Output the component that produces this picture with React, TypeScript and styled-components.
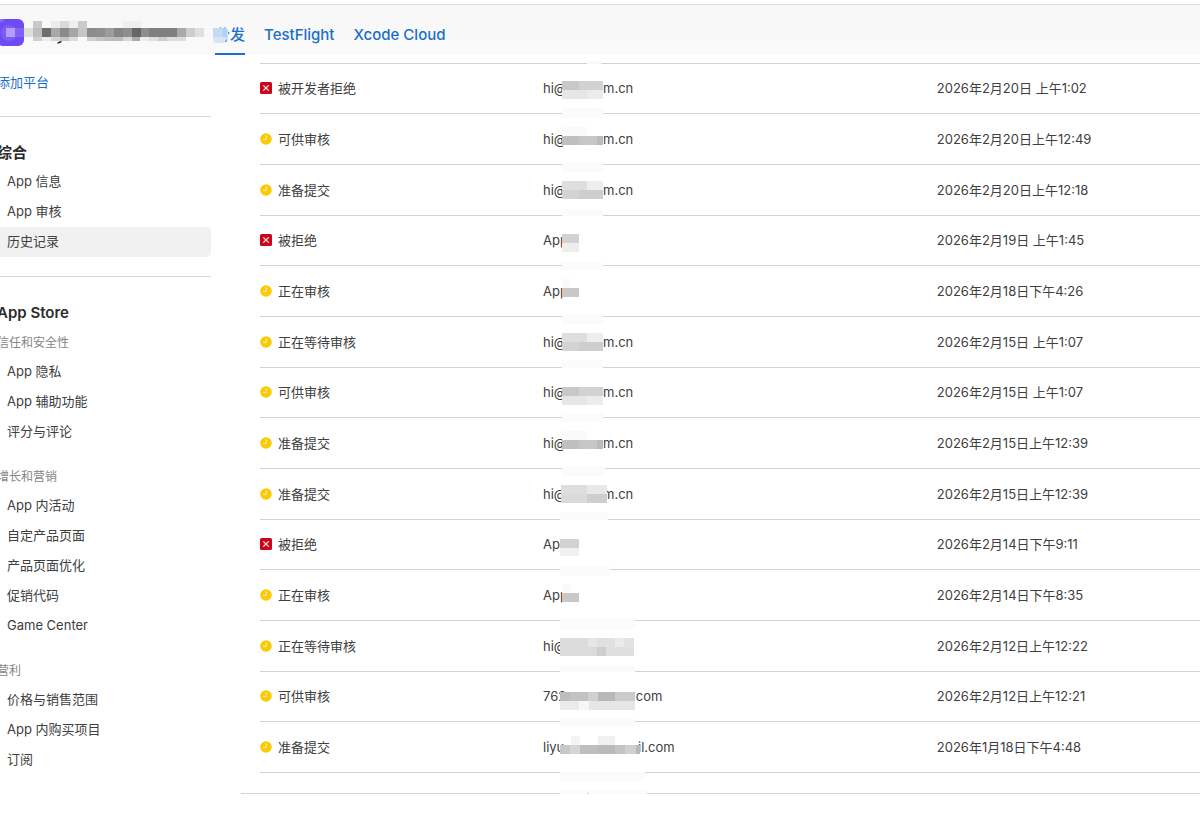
import React from "react";
import styled, { createGlobalStyle } from "styled-components";

const GlobalStyle = createGlobalStyle`
  * { box-sizing: border-box; }
  body {
    margin: 0;
    background: #fff;
    color: #333;
    font-family: Inter, "Noto Sans CJK SC", sans-serif;
    font-size: 13px;
    line-height: 20px;
    overflow-x: hidden;
  }
`;

/* x, y, width, height, fill */
type Block = [number, number, number, number, string];

const Header = styled.header`
  display: flex;
  align-items: stretch;
  height: 51px;
  margin-top: 4px;
  border-top: 1px solid #dcdcdc;
  background: linear-gradient(#f7f7f7, #fafafa);
`;

const AppBadge = styled.div`
  width: 215px;
  flex: none;
`;

const BadgeArt = styled.svg`
  display: block;
`;

const Tabs = styled.nav`
  display: flex;
  gap: 19px;
`;

const Tab = styled.a<{ $active?: boolean }>`
  position: relative;
  display: flex;
  align-items: center;
  padding-top: 20px;
  padding-bottom: ${(p) => (p.$active ? 8 : 10)}px;
  border-bottom: ${(p) => (p.$active ? "2px solid #1a6fc9" : "none")};
  color: #1a6fc9;
  font-size: 15px;
  font-weight: 500;
  text-decoration: none;
`;

const TabMask = styled.svg`
  position: absolute;
  left: -2px;
  top: 23px;
`;

const Page = styled.div`
  display: flex;
  align-items: flex-start;
`;

const Sidebar = styled.aside`
  width: 211px;
  flex: none;
  padding-top: 12px;
`;

const AddLink = styled.a`
  display: block;
  margin-left: -3px;
  line-height: 30px;
  color: #1a6fc9;
  text-decoration: none;
`;

const Section = styled.section`
  margin-top: 19px;
  padding-top: 20px;
  border-top: 1px solid #d6d6d6;
`;

const SectionTitle = styled.h2`
  margin: 0 0 0 -3px;
  padding-top: 2px;
  font-size: 15px;
  font-weight: 600;
  line-height: 28px;
  color: #2b2b2b;
`;

const GroupTitle = styled.h3`
  margin: 0 0 0 -3px;
  padding-top: 2px;
  font-size: 12px;
  font-weight: 400;
  line-height: 28px;
  color: #858585;
`;

const NavList = styled.ul`
  list-style: none;
  margin: 0;
  padding: 0;

  & + h3 {
    margin-top: 14px;
  }
`;

const NavLink = styled.a<{ $current?: boolean }>`
  display: block;
  padding: 0 0 2px 7px;
  line-height: 28px;
  color: #404040;
  text-decoration: none;
  border-radius: 0 5px 5px 0;
  background: ${(p) => (p.$current ? "#f1f1f1" : "transparent")};
`;

const Main = styled.main`
  position: relative;
  flex: 1;
  min-width: 0;
  margin-left: 30px;
  padding-top: 8px;
`;

const HistoryWrap = styled.div`
  padding: 0 0 20px 19px;
  border-bottom: 1px solid #d2d2d2;
`;

const HistoryTable = styled.table`
  width: 100%;
  table-layout: fixed;
  border-collapse: separate;
  border-spacing: 0;
  border-top: 1px solid #d2d2d2;
`;

const Cell = styled.td<{ $share?: number }>`
  position: relative;
  width: ${(p) => (p.$share ? `${p.$share}%` : "auto")};
  padding: 0;
  border-bottom: 1px solid #d2d2d2;
  color: #404040;
  white-space: nowrap;
`;

const Row = styled.tr`
  height: 51px;

  &:nth-child(3n + 1) {
    height: 50px;
  }

  &:nth-child(3n + 1) > td {
    padding-bottom: 1px;
  }
`;

const Status = styled.span`
  display: flex;
  align-items: center;
  gap: 6px;
`;

const StatusIcon = styled.svg`
  flex: none;
`;

const Account = styled.span`
  display: flex;
  padding-left: 1px;
`;

const AccountStart = styled.span<{ $width: number }>`
  width: ${(p) => p.$width}px;
`;

const Mask = styled.svg`
  position: absolute;
  left: 0;
  top: 0;
`;

const HeadMask = styled.svg`
  position: absolute;
  left: 346px;
  top: 6px;
`;

const FootMask = styled.svg`
  position: absolute;
  left: 301px;
  bottom: -27px;
`;

const Blocks = ({ data }: { data: Block[] }) => (
  <>
    {data.map(([x, y, w, h, fill], i) => (
      <rect key={i} x={x} y={y} width={w} height={h} fill={fill} shapeRendering="crispEdges" />
    ))}
  </>
);

const badgeBlocks: Block[] = [
  [33, 16, 9, 7, "#c9c9c9"], [51, 16, 9, 7, "#ececec"], [60, 16, 9, 7, "#dadada"],
  [69, 16, 9, 7, "#efefef"], [78, 16, 9, 7, "#cbcbcb"], [123, 16, 18, 7, "#efefef"],
  [24, 23, 9, 9, "#dedede"], [33, 23, 9, 9, "#bebebe"], [42, 23, 9, 9, "#6e6e6e"],
  [51, 23, 9, 9, "#a8a8a8"], [60, 23, 9, 9, "#8a8a8a"], [69, 23, 9, 9, "#a6a6a6"],
  [78, 23, 9, 9, "#c6c6c6"], [87, 23, 9, 9, "#8c8c8c"], [96, 23, 9, 9, "#8f8f8f"],
  [105, 23, 9, 9, "#9c9c9c"], [114, 23, 9, 9, "#858585"], [123, 23, 9, 9, "#8e8e8e"],
  [132, 23, 9, 9, "#666666"], [141, 23, 8, 9, "#8e8e8e"], [149, 23, 28, 9, "#7f7f7f"],
  [177, 23, 9, 9, "#a9a9a9"], [186, 23, 9, 9, "#cdcdcd"], [195, 23, 9, 9, "#e0e0e0"],
  [33, 32, 9, 4, "#cfcfcf"], [42, 32, 9, 4, "#ececec"], [51, 32, 9, 4, "#d4d4d4"],
  [60, 32, 9, 4, "#c6c6c6"], [69, 32, 9, 4, "#dcdcdc"], [87, 32, 9, 4, "#cfcfcf"],
  [96, 32, 9, 4, "#c4c4c4"], [105, 32, 18, 4, "#bcbcbc"], [123, 32, 9, 4, "#d6d6d6"],
  [132, 32, 8, 4, "#ababab"], [140, 32, 9, 4, "#ececec"], [149, 32, 9, 4, "#e0e0e0"],
  [158, 32, 9, 4, "#cdcdcd"], [167, 32, 19, 4, "#dddddd"],
];

type State = "rejected" | "pending";

interface Entry {
  state: State;
  status: string;
  start: string;
  startWidth: number;
  end?: string;
  date: string;
  mask: Block[];
}

const darkTop: Block[] = [
  [20, 17, 17, 9, "#c8c8c8"], [37, 17, 24, 9, "#d2d2d2"],
  [20, 26, 25, 9, "#e6e6e6"], [45, 26, 16, 9, "#ececec"],
];
const thinBar: Block[] = [
  [20, 13, 25, 9, "#fafafa"], [20, 22, 17, 9, "#bfbfbf"],
  [37, 22, 18, 9, "#c6c6c6"], [55, 22, 6, 9, "#bababa"],
];
const darkBottom: Block[] = [
  [20, 16, 25, 9, "#dedede"], [45, 16, 16, 9, "#eeeeee"],
  [20, 25, 17, 9, "#d3d3d3"], [37, 25, 24, 9, "#cecece"],
];
const strip = (x: number, y: number, w: number, h: number): Block => [x, y, w, h, "#fbfbfb"];

const entries: Entry[] = [
  { state: "rejected", status: "被开发者拒绝", start: "hi@", startWidth: 60, end: "m.cn", date: "2026年2月20日 上午1:02",
    mask: [...darkTop, strip(20, 44, 41, 6)] },
  { state: "pending", status: "可供审核", start: "hi@", startWidth: 60, end: "m.cn", date: "2026年2月20日上午12:49",
    mask: [strip(20, 0, 41, 4), ...thinBar, strip(20, 49, 41, 2)] },
  { state: "pending", status: "准备提交", start: "hi@", startWidth: 60, end: "m.cn", date: "2026年2月20日上午12:18",
    mask: [strip(20, 0, 41, 7), ...darkBottom, strip(20, 44, 41, 7)] },
  { state: "rejected", status: "被拒绝", start: "App", startWidth: 60, date: "2026年2月19日 上午1:45",
    mask: [[20, 18, 17, 9, "#d2d2d2"], [20, 27, 17, 9, "#eeeeee"], strip(20, 46, 41, 4)] },
  { state: "pending", status: "正在审核", start: "App", startWidth: 60, date: "2026年2月18日下午4:26",
    mask: [strip(20, 0, 41, 4), [20, 13, 8, 9, "#fafafa"], [20, 22, 17, 9, "#c8c8c8"], strip(20, 49, 41, 2)] },
  { state: "pending", status: "正在等待审核", start: "hi@", startWidth: 60, end: "m.cn", date: "2026年2月15日 上午1:07",
    mask: [strip(20, 0, 41, 7), ...darkBottom, strip(20, 43, 41, 8)] },
  { state: "pending", status: "可供审核", start: "hi@", startWidth: 60, end: "m.cn", date: "2026年2月15日 上午1:07",
    mask: [...darkTop.map(([x, y, w, h, c]): Block => [x, y + 2, w, h, c]), strip(20, 45, 41, 5)] },
  { state: "pending", status: "准备提交", start: "hi@", startWidth: 60, end: "m.cn", date: "2026年2月15日上午12:39",
    mask: [strip(20, 0, 41, 4), ...thinBar, strip(20, 49, 43, 2)] },
  { state: "pending", status: "准备提交", start: "hi@", startWidth: 60, end: "m.cn", date: "2026年2月15日上午12:39",
    mask: [strip(20, 0, 43, 7), [19, 16, 26, 9, "#dedede"], [45, 16, 20, 9, "#e8e8e8"], [19, 25, 26, 9, "#dadada"],
      [45, 25, 20, 9, "#cecece"], strip(18, 43, 48, 8)] },
  { state: "rejected", status: "被拒绝", start: "App", startWidth: 60, date: "2026年2月14日下午9:11",
    mask: [[18, 19, 19, 9, "#d2d2d2"], [18, 28, 19, 8, "#f0f0f0"], strip(18, 46, 50, 4)] },
  { state: "pending", status: "正在审核", start: "App", startWidth: 60, date: "2026年2月14日下午8:35",
    mask: [strip(18, 0, 50, 6), [20, 14, 9, 9, "#fafafa"], [20, 23, 17, 9, "#c8c8c8"], strip(18, 49, 75, 2)] },
  { state: "pending", status: "正在等待审核", start: "hi@", startWidth: 60, date: "2026年2月12日上午12:22",
    mask: [strip(18, 0, 75, 8), [18, 17, 28, 9, "#dcdcdc"], [46, 17, 9, 9, "#e6e6e6"], [55, 17, 18, 9, "#e0e0e0"],
      [73, 17, 9, 9, "#ebebeb"], [82, 17, 10, 9, "#e2e2e2"], [18, 26, 37, 9, "#dbdbdb"], [55, 26, 9, 9, "#cecece"],
      [64, 26, 28, 9, "#dfdfdf"], strip(18, 44, 75, 7)] },
  { state: "pending", status: "可供审核", start: "762", startWidth: 89, end: ".com", date: "2026年2月12日上午12:21",
    mask: [[18, 20, 10, 9, "#bdbdbd"], [28, 20, 18, 9, "#c3c3c3"], [46, 20, 10, 9, "#d0d0d0"], [56, 20, 17, 9, "#b8b8b8"],
      [73, 20, 20, 9, "#cbcbcb"], [18, 29, 19, 9, "#ebebeb"], [37, 29, 10, 9, "#f7f7f7"], [47, 29, 46, 9, "#e6e6e6"],
      strip(18, 46, 75, 4)] },
  { state: "pending", status: "准备提交", start: "liyu", startWidth: 95, end: "il.com", date: "2026年1月18日下午4:48",
    mask: [strip(18, 0, 75, 5), [29, 14, 9, 9, "#f3f3f3"], [56, 14, 17, 9, "#f1f1f1"], [18, 23, 10, 9, "#c8c8c8"],
      [28, 23, 10, 9, "#d5d5d5"], [38, 23, 17, 9, "#bebebe"], [55, 23, 18, 9, "#bababa"], [73, 23, 10, 9, "#c4c4c4"],
      [83, 23, 11, 9, "#d0d0d0"], [94, 23, 4, 9, "#b8b8b8"]] },
];

const StateIcon = ({ state }: { state: State }) =>
  state === "rejected" ? (
    <StatusIcon width="12" height="12" viewBox="0 0 12 12" aria-hidden="true">
      <rect width="12" height="12" rx="1.5" fill="#d0021b" />
      <path d="M3.3 3.3l5.4 5.4M8.7 3.3L3.3 8.7" stroke="#fff" strokeWidth="1.1" />
    </StatusIcon>
  ) : (
    <StatusIcon width="12" height="12" viewBox="0 0 12 12" aria-hidden="true">
      <circle cx="6" cy="6" r="5.8" fill="#fbca04" />
      <path d="M6.2 2.5v3.9H3.2" fill="none" stroke="#fff" strokeOpacity="0.85" strokeWidth="1" />
    </StatusIcon>
  );

const Nav = ({ items, current }: { items: string[]; current?: string }) => (
  <NavList>
    {items.map((item) => (
      <li key={item}>
        <NavLink href="#" $current={item === current} aria-current={item === current ? "page" : undefined}>
          {item}
        </NavLink>
      </li>
    ))}
  </NavList>
);

export default function App() {
  return (
    <>
      <GlobalStyle />
      <Header>
        <AppBadge>
          <BadgeArt width="210" height="50" aria-hidden="true">
            <rect x="-3" y="14" width="27" height="27" rx="6" fill="#6c4af4" />
            <path d="M0 18Q3 17 6 14.500H0Z" fill="#8566f8" />
            <circle cx="9" cy="28" r="8" fill="#7c5cf7" />
            <rect x="6" y="23" width="9" height="9" fill="#b49cfb" />
            <rect x="15" y="23" width="9" height="9" fill="#7f63f6" />
            <Blocks data={badgeBlocks} />
            <path d="M57 38.500Q58 36 62 36Q61 39 57 38.500Z" fill="#222" />
          </BadgeArt>
        </AppBadge>
        <Tabs>
          <Tab href="#" $active aria-current="page">
            分发
            <TabMask width="16" height="16" aria-hidden="true">
              <path d="M0 0H13Q16 3 15 8Q14 12 11 15H3Q0 14 0 11Z" fill="#d3e5f7" />
              <rect width="9" height="9" fill="#c3dbf3" />
              <rect x="9" width="5" height="9" fill="#b4d2f0" />
            </TabMask>
          </Tab>
          <Tab href="#">TestFlight</Tab>
          <Tab href="#">Xcode Cloud</Tab>
        </Tabs>
      </Header>
      <Page>
        <Sidebar>
          <AddLink href="#">添加平台</AddLink>
          <Section>
            <SectionTitle>综合</SectionTitle>
            <Nav items={["App 信息", "App 审核", "历史记录"]} current="历史记录" />
          </Section>
          <Section>
            <SectionTitle>App Store</SectionTitle>
            <GroupTitle>信任和安全性</GroupTitle>
            <Nav items={["App 隐私", "App 辅助功能", "评分与评论"]} />
            <GroupTitle>增长和营销</GroupTitle>
            <Nav items={["App 内活动", "自定产品页面", "产品页面优化", "促销代码", "Game Center"]} />
            <GroupTitle>营利</GroupTitle>
            <Nav items={["价格与销售范围", "App 内购买项目", "订阅"]} />
          </Section>
        </Sidebar>
        <Main>
          <HistoryWrap>
            <HistoryTable>
              <tbody>
                {entries.map((e, i) => (
                  <Row key={i}>
                    <Cell $share={30}>
                      <Status>
                        <StateIcon state={e.state} />
                        {e.status}
                      </Status>
                    </Cell>
                    <Cell $share={42}>
                      <Account>
                        <AccountStart $width={e.startWidth}>{e.start}</AccountStart>
                        {e.end && <span>{e.end}</span>}
                      </Account>
                      <Mask width="110" height="51" aria-hidden="true">
                        <Blocks data={e.mask} />
                      </Mask>
                    </Cell>
                    <Cell>{e.date}</Cell>
                  </Row>
                ))}
              </tbody>
            </HistoryTable>
          </HistoryWrap>
          <HeadMask width="14" height="3" aria-hidden="true">
            <Blocks data={[[0, 0, 14, 3, "#fafafa"]]} />
          </HeadMask>
          <FootMask width="106" height="74" aria-hidden="true">
            <Blocks data={[[18, 25, 85, 9, "#fbfbfb"], [18, 43, 87, 9, "#fbfbfb"], [45, 46, 2, 1, "#d2d2d2"], [18, 70, 87, 3, "#fcfcfc"]]} />
          </FootMask>
        </Main>
      </Page>
    </>
  );
}
